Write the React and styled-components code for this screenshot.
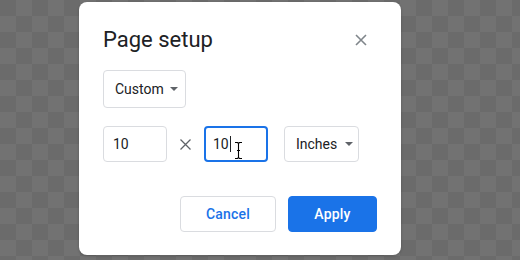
import React from "react";
import styled, { createGlobalStyle } from "styled-components";

const GlobalStyle = createGlobalStyle`
  html, body {
    margin: 0;
    padding: 0;
    background: #6c6c6c;
  }
  body {
    font-family: Roboto, "Liberation Sans", Arial, sans-serif;
  }
`;

const Page = styled.div`
  box-sizing: border-box;
  width: 520px;
  height: 260px;
  overflow: hidden;
  padding: 2px 0 0 79px;
  background-color: #6b6b6b;
  background-image:
    linear-gradient(45deg, #727272 25%, transparent 25%, transparent 75%, #727272 75%),
    linear-gradient(45deg, #727272 25%, transparent 25%, transparent 75%, #727272 75%);
  background-size: 32px 32px;
  background-position: 0 0, 16px 16px;
`;

const Dialog = styled.div`
  width: 322px;
  box-sizing: border-box;
  padding: 24px 24px 23px;
  background: #fff;
  border-radius: 8px;
  box-shadow: 0 1px 3px rgba(0, 0, 0, 0.2);
`;

const Header = styled.div`
  display: flex;
  align-items: center;
  justify-content: space-between;
  height: 28px;
  margin-bottom: 16px;
`;

const Title = styled.h2`
  margin: 0;
  font-size: 22px;
  line-height: 28px;
  font-weight: 400;
  color: #202124;
`;

const Close = styled.button`
  display: flex;
  align-items: center;
  justify-content: center;
  width: 24px;
  height: 24px;
  margin-right: 4px;
  padding: 0;
  border: none;
  background: none;
`;

const Select = styled.div`
  display: flex;
  align-items: center;
  gap: ${(p) => p.$gap}px;
  box-sizing: border-box;
  width: ${(p) => p.$width}px;
  height: ${(p) => p.$height || 36}px;
  padding-left: 11px;
  border: 1px solid #dadce0;
  border-radius: 4px;
  font-size: 14px;
  color: #202124;
`;

const Arrow = styled.span`
  width: 0;
  height: 0;
  border-left: 4px solid transparent;
  border-right: 4px solid transparent;
  border-top: 4px solid #5f6368;
`;

const Row = styled.div`
  display: flex;
  align-items: center;
  margin-top: 18px;
`;

const Field = styled.div`
  position: relative;
  display: flex;
  align-items: center;
  box-sizing: border-box;
  width: 64px;
  height: 36px;
  padding-left: ${(p) => (p.$focused ? 7 : 9)}px;
  border: ${(p) => (p.$focused ? "2px solid #1a73e8" : "1px solid #dadce0")};
  border-radius: 4px;
  font-size: 14px;
  color: #202124;
`;

const Caret = styled.span`
  display: inline-block;
  width: 1px;
  height: 16px;
  margin-left: 1px;
  background: #202124;
`;

const Pointer = styled.svg`
  position: absolute;
  left: 28px;
  top: 13px;
`;

const Times = styled.div`
  display: flex;
  align-items: center;
  justify-content: center;
  width: 37px;
`;

const Spacer = styled.div`
  width: 16px;
`;

const Actions = styled.div`
  display: flex;
  justify-content: flex-end;
  gap: 12px;
  margin-top: 34px;
`;

const Button = styled.button`
  box-sizing: border-box;
  width: ${(p) => p.$width}px;
  height: 36px;
  border-radius: 4px;
  font-family: Roboto, "Liberation Sans", Arial, sans-serif;
  font-size: 14px;
  font-weight: 500;
  letter-spacing: 0.2px;
  border: 1px solid ${(p) => (p.$primary ? "#1a73e8" : "#dadce0")};
  background: ${(p) => (p.$primary ? "#1a73e8" : "#fff")};
  color: ${(p) => (p.$primary ? "#fff" : "#1a73e8")};
`;

export default function App() {
  return (
    <>
      <GlobalStyle />
      <Page>
        <Dialog>
          <Header>
            <Title>Page setup</Title>
            <Close aria-label="Close">
              <svg width="12" height="12" viewBox="0 0 12 12">
                <path d="M1 1L11 11M11 1L1 11" stroke="#80868b" strokeWidth="1.6" />
              </svg>
            </Close>
          </Header>
          <Select $width={83} $height={38} $gap={6}>
            Custom
            <Arrow />
          </Select>
          <Row>
            <Field>10</Field>
            <Times>
              <svg width="11" height="11" viewBox="0 0 11 11">
                <path d="M0.5 0.5L10.5 10.5M10.5 0.5L0.5 10.5" stroke="#5f6368" strokeWidth="1.3" />
              </svg>
            </Times>
            <Field $focused>
              10
              <Caret />
              <Pointer width="9" height="19" viewBox="0 0 9 19">
                <path
                  d="M1 1.5h2.5l1 1 1-1H8M4.5 2.5v14M1 17.5h2.5l1-1 1 1H8M3 9.5h3"
                  fill="none"
                  stroke="#fff"
                  strokeWidth="2.6"
                />
                <path
                  d="M1 1.5h2.5l1 1 1-1H8M4.5 2.5v14M1 17.5h2.5l1-1 1 1H8M3 9.5h3"
                  fill="none"
                  stroke="#000"
                  strokeWidth="1.1"
                />
              </Pointer>
            </Field>
            <Spacer />
            <Select $width={75} $gap={8}>
              Inches
              <Arrow />
            </Select>
          </Row>
          <Actions>
            <Button $width={96}>Cancel</Button>
            <Button $width={89} $primary>
              Apply
            </Button>
          </Actions>
        </Dialog>
      </Page>
    </>
  );
}
